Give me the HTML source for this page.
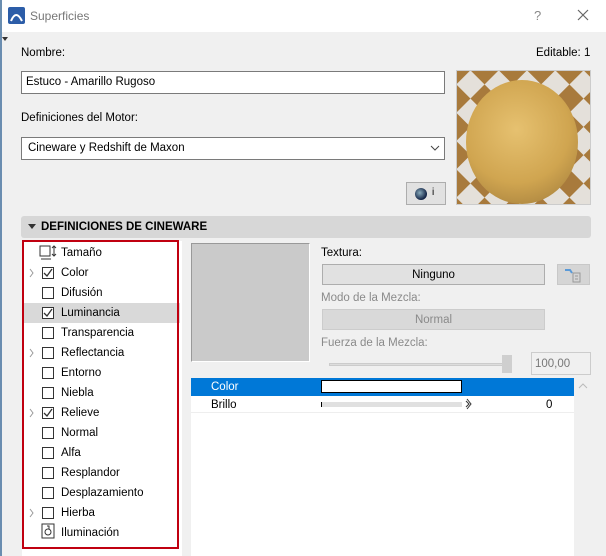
<!DOCTYPE html><html><head><style>
*{box-sizing:border-box}
body{margin:0;width:606px;height:556px;background:#f0f0f0;font-family:"Liberation Sans",sans-serif;font-size:11.5px;color:#000;position:relative;overflow:hidden}
.a{position:absolute}
.chk{position:absolute;left:42px;width:12px;height:12px;border:1px solid #333;background:#fff}
.lbl{position:absolute;left:61px}
</style></head><body>
<div class="a" style="left:0;top:0;width:606px;height:32px;background:#fff"></div>
<div class="a" style="left:0;top:0;width:2px;height:556px;background:#6a8db0"></div>
<svg class="a" style="left:8px;top:7px" width="17" height="17"><rect width="17" height="17" rx="2" fill="#2c5da8"/><path d="M3 14 Q8 2 14 14" stroke="#fff" stroke-width="2" fill="none"/></svg>
<div class="a" style="left:30px;top:9px;font-size:12px;color:#777">Superficies</div>
<div class="a" style="left:534px;top:8px;font-size:13px;color:#888">?</div>
<svg class="a" style="left:577px;top:9px" width="12" height="12"><path d="M1 1L11 11M11 1L1 11" stroke="#666" stroke-width="1.2"/></svg>
<div class="a" style="left:2px;top:37px;border:3px solid transparent;border-top:4px solid #333"></div>
<div class="a" style="left:21px;top:47px">Nombre:</div>
<div class="a" style="left:536px;top:47px">Editable: 1</div>
<div class="a" style="left:21px;top:71px;width:424px;height:23px;background:#fff;border:1px solid #7a7a7a;padding:4px 4px">Estuco - Amarillo Rugoso</div>
<div class="a" style="left:21px;top:112px">Definiciones del Motor:</div>
<div class="a" style="left:21px;top:137px;width:424px;height:23px;background:#fff;border:1px solid #7a7a7a;padding:4px 6px">Cineware y Redshift de Maxon</div>
<svg class="a" style="left:430px;top:144px" width="10" height="8"><path d="M1 2 L5 6 L9 2" stroke="#444" fill="none"/></svg>
<div class="a" style="left:406px;top:182px;width:40px;height:23px;background:#e1e1e1;border:1px solid #adadad"></div>
<div class="a" style="left:415px;top:188px;width:12px;height:12px;border-radius:50%;background:radial-gradient(circle at 40% 40%,#8ab,#124 70%)"></div>
<div class="a" style="left:432px;top:187px;font-size:10px">i</div>
<div class="a" style="left:456px;top:70px;width:135px;height:135px;border:1px solid #ccc;overflow:hidden;background:#ddd"><div style="position:absolute;left:-60px;top:-60px;width:260px;height:260px;transform:rotate(45deg);background:repeating-conic-gradient(#a87a3c 0 25%,#e4e0da 0 50%) 0 0/40px 40px"></div></div>
<div class="a" style="left:466px;top:80px;width:112px;height:124px;border-radius:50%;background:radial-gradient(circle at 45% 40%,#e6c170,#d0a550 55%,#9a7638 100%)"></div>
<div class="a" style="left:21px;top:216px;width:570px;height:22px;background:#d7d7d7;border-radius:3px"></div>
<div class="a" style="left:28px;top:224px;border:4px solid transparent;border-top:5px solid #333"></div>
<div class="a" style="left:41px;top:221px;font-weight:bold">DEFINICIONES DE CINEWARE</div>
<div class="a" style="left:22px;top:241px;width:160px;height:315px;background:#fff"></div>
<div class="a" style="left:22px;top:303px;width:158px;height:20px;background:#d9d9d9"></div>
<div class="a" style="left:22px;top:240px;width:157px;height:309px;border:2px solid #c00010"></div>
<svg class="a" style="left:39px;top:245px" width="20" height="16"><rect x="1" y="1" width="10" height="10" fill="none" stroke="#333"/><path d="M15 1v10M13 3l2-2 2 2M13 9l2 2 2-2M2 14h10" stroke="#333" fill="none"/></svg>
<div class="lbl" style="top:247px">Tamaño</div>
<div class="chk" style="top:267px"></div><div class="lbl" style="top:267px">Color</div>
<div class="chk" style="top:287px"></div><div class="lbl" style="top:287px">Difusión</div>
<div class="chk" style="top:307px"></div><div class="lbl" style="top:307px">Luminancia</div>
<div class="chk" style="top:327px"></div><div class="lbl" style="top:327px">Transparencia</div>
<div class="chk" style="top:347px"></div><div class="lbl" style="top:347px">Reflectancia</div>
<div class="chk" style="top:367px"></div><div class="lbl" style="top:367px">Entorno</div>
<div class="chk" style="top:387px"></div><div class="lbl" style="top:387px">Niebla</div>
<div class="chk" style="top:407px"></div><div class="lbl" style="top:407px">Relieve</div>
<div class="chk" style="top:427px"></div><div class="lbl" style="top:427px">Normal</div>
<div class="chk" style="top:447px"></div><div class="lbl" style="top:447px">Alfa</div>
<div class="chk" style="top:467px"></div><div class="lbl" style="top:467px">Resplandor</div>
<div class="chk" style="top:487px"></div><div class="lbl" style="top:487px">Desplazamiento</div>
<div class="chk" style="top:507px"></div><div class="lbl" style="top:507px">Hierba</div>
<svg class="a" style="left:41px;top:523px" width="14" height="16"><rect x="1" y="1" width="12" height="14" fill="none" stroke="#333"/><circle cx="7" cy="9" r="3" fill="none" stroke="#333"/><path d="M6 3h2v3" stroke="#333" fill="none"/></svg>
<div class="lbl" style="top:527px">Iluminación</div>
<svg class="a" style="left:0;top:0" width="60" height="556"><g stroke="#333" stroke-width="1.3" fill="none"><path d="M44 273l3 3 5-7M44 313l3 3 5-7M44 413l3 3 5-7"/></g><g stroke="#999" fill="none"><path d="M30 269l3 4-3 4M30 349l3 4-3 4M30 409l3 4-3 4M30 509l3 4-3 4"/></g></svg>
<div class="a" style="left:191px;top:243px;width:119px;height:119px;background:#cacaca;border:1px solid #999;border-right-color:#fff;border-bottom-color:#fff"></div>
<div class="a" style="left:321px;top:247px">Textura:</div>
<div class="a" style="left:322px;top:264px;width:223px;height:21px;background:#e1e1e1;border:1px solid #adadad;text-align:center;padding-top:4px">Ninguno</div>
<div class="a" style="left:557px;top:264px;width:33px;height:21px;background:#d5d5d5;border:1px solid #c8c8c8"></div>
<svg class="a" style="left:564px;top:267px" width="18" height="16"><path d="M1 3h5l2 3" stroke="#5a9ad8" stroke-width="2" fill="none"/><rect x="9" y="6" width="7" height="9" fill="none" stroke="#999"/><path d="M11 9h3M11 12h3" stroke="#999"/></svg>
<div class="a" style="left:321px;top:292px;color:#8a8a8a">Modo de la Mezcla:</div>
<div class="a" style="left:322px;top:309px;width:223px;height:21px;background:#d9d9d9;border:1px solid #ccc;text-align:center;padding-top:4px;color:#8a8a8a">Normal</div>
<div class="a" style="left:321px;top:337px;color:#8a8a8a">Fuerza de la Mezcla:</div>
<div class="a" style="left:329px;top:363px;width:180px;height:3px;background:#ddd;border:1px solid #ccc"></div>
<div class="a" style="left:502px;top:355px;width:10px;height:18px;background:#cfcfcf"></div>
<div class="a" style="left:531px;top:352px;width:60px;height:23px;border:1px solid #ccc;color:#777;padding:5px 3px">100,00</div>
<div class="a" style="left:191px;top:378px;width:383px;height:178px;background:#fff"></div>
<div class="a" style="left:191px;top:378px;width:383px;height:18px;background:#0078d7"></div>
<div class="a" style="left:211px;top:381px;color:#fff">Color</div>
<div class="a" style="left:321px;top:380px;width:141px;height:13px;background:#fff;border:1px solid #000"></div>
<div class="a" style="left:211px;top:399px">Brillo</div>
<div class="a" style="left:321px;top:402px;width:141px;height:5px;background:#e0e0e0;border-left:1px solid #000"></div>
<svg class="a" style="left:465px;top:398px" width="8" height="12"><path d="M2 1l4 5-4 5M1 3l3 3-3 3" stroke="#333" fill="none"/></svg>
<div class="a" style="left:546px;top:399px">0</div>
<div class="a" style="left:191px;top:412px;width:383px;height:1px;background:#eee"></div>
<svg class="a" style="left:578px;top:382px" width="10" height="8"><path d="M1 6l4-4 4 4" stroke="#bbb" fill="none"/></svg>
</body></html>
